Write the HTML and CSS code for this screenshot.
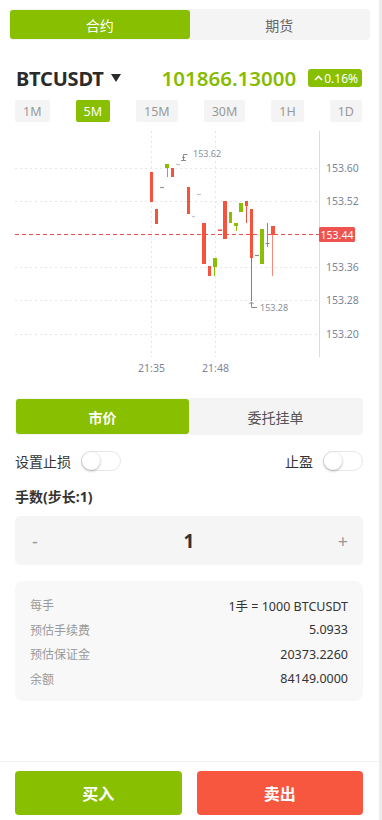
FILE: index.html
```html
<!DOCTYPE html>
<html lang="zh">
<head>
<meta charset="utf-8">
<title>BTCUSDT</title>
<link rel="stylesheet" href="styles.css">
</head>
<body>
<div class="page">
  <div class="top-tabs">
    <div class="top-tab active">合约</div>
    <div class="top-tab">期货</div>
  </div>

  <div class="ticker">
    <div class="symbol">BTCUSDT<span class="caret"></span></div>
    <div class="price">101866.13000</div>
    <div class="badge">
      <svg width="9" height="6" viewBox="0 0 9 6"><path d="M1 5 L4.5 1.5 L8 5" fill="none" stroke="#fff" stroke-width="1.6"/></svg>
      <span>0.16%</span>
    </div>
  </div>

  <div class="periods">
    <div class="period">1M</div>
    <div class="period active">5M</div>
    <div class="period">15M</div>
    <div class="period">30M</div>
    <div class="period">1H</div>
    <div class="period">1D</div>
  </div>

  <svg class="chart" width="382" height="252" viewBox="0 128 382 252">
    <g stroke="#e6e6e6" stroke-width="1" stroke-dasharray="2 3">
      <line x1="15" y1="168.5" x2="318" y2="168.5"/>
      <line x1="15" y1="201.5" x2="318" y2="201.5"/>
      <line x1="15" y1="267.5" x2="318" y2="267.5"/>
      <line x1="15" y1="300.5" x2="318" y2="300.5"/>
      <line x1="15" y1="334.5" x2="318" y2="334.5"/>
      <line x1="151.5" y1="131" x2="151.5" y2="357"/>
      <line x1="215.5" y1="131" x2="215.5" y2="357"/>
    </g>
    <line x1="319.5" y1="131" x2="319.5" y2="357" stroke="#dcdcdc"/>
    <line x1="15" y1="234.5" x2="319" y2="234.5" stroke="#ea5050" stroke-dasharray="4 3"/>

    <g fill="#f5533d">
      <rect x="150" y="172" width="3" height="30"/>
      <rect x="155" y="209" width="3" height="15"/>
      <rect x="171" y="168" width="3" height="9"/>
      <rect x="187" y="187" width="3" height="27"/>
      <rect x="202" y="223" width="4" height="41"/>
      <rect x="208" y="266" width="3" height="10"/>
      <rect x="218" y="229.5" width="4" height="1.5"/>
      <rect x="223" y="201" width="4" height="38"/>
      <rect x="245" y="201" width="3" height="5"/>
      <rect x="250" y="209" width="3" height="49"/>
      <rect x="271" y="226" width="4" height="9"/>
    </g>
    <g stroke="#f5533d" stroke-width="1">
      <line x1="246.5" y1="206" x2="246.5" y2="223"/>
      <line x1="251.5" y1="258" x2="251.5" y2="301"/>
      <line x1="272.5" y1="235" x2="272.5" y2="276" stroke="#f88a7c"/>
    </g>
    <g fill="#88bf00">
      <rect x="165" y="164" width="4" height="4"/>
      <rect x="213" y="258" width="4" height="9"/>
      <rect x="229" y="212" width="3" height="11"/>
      <rect x="234" y="223" width="4" height="3"/>
      <rect x="239" y="203" width="4" height="9"/>
      <rect x="260" y="229" width="4" height="35"/>
    </g>
    <g stroke="#88bf00" stroke-width="1">
      <line x1="167.5" y1="168" x2="167.5" y2="177"/>
      <line x1="214.5" y1="267" x2="214.5" y2="276"/>
      <line x1="236.5" y1="226" x2="236.5" y2="231"/>
    </g>
    <g stroke="#c4c4c4" stroke-width="1.2">
      <line x1="160" y1="187.5" x2="164" y2="187.5" stroke="#9a9a9a"/>
      <line x1="176" y1="164.5" x2="180" y2="164.5"/>
      <line x1="197" y1="194.5" x2="201" y2="194.5"/>
      <line x1="192" y1="216.5" x2="195" y2="216.5"/>
      <line x1="255" y1="255.5" x2="259" y2="255.5" stroke="#8a8a8a"/>
    </g>
    <g stroke="#8a8a8a" stroke-width="1" fill="none">
      <line x1="267.5" y1="223" x2="267.5" y2="247"/>
      <line x1="265.5" y1="243.5" x2="269.5" y2="243.5"/>
      <path d="M187.5 154.5 H183.5 V160 M181 160.5 H186 M182 157.5 H185"/>
      <path d="M251.5 302 V307.5 H257 M249.5 304 L251.5 302 L253.5 304"/>
    </g>
    <g class="mark">
      <text x="193" y="157">153.62</text>
      <text x="260" y="311">153.28</text>
    </g>
    <g class="axis">
      <text x="326" y="172">153.60</text>
      <text x="326" y="205">153.52</text>
      <text x="326" y="271">153.36</text>
      <text x="326" y="304">153.28</text>
      <text x="326" y="338">153.20</text>
      <text x="151.5" y="372" text-anchor="middle">21:35</text>
      <text x="215.5" y="372" text-anchor="middle">21:48</text>
    </g>
    <rect x="319" y="227" width="36" height="15" rx="1.5" fill="#ee5350"/>
    <text class="cur" x="337" y="238.5" text-anchor="middle">153.44</text>
  </svg>

  <div class="order-tabs">
    <div class="order-tab active">市价</div>
    <div class="order-tab">委托挂单</div>
  </div>

  <div class="switch-row">
    <div class="switch-item">
      <span>设置止损</span>
      <span class="switch"><span class="knob"></span></span>
    </div>
    <div class="switch-item">
      <span>止盈</span>
      <span class="switch"><span class="knob"></span></span>
    </div>
  </div>

  <div class="qty-label">手数(步长:1)</div>
  <div class="stepper">
    <span class="step">-</span>
    <span class="qty">1</span>
    <span class="step">+</span>
  </div>

  <div class="info">
    <div class="info-row"><span class="k">每手</span><span class="v">1手 = 1000 BTCUSDT</span></div>
    <div class="info-row"><span class="k">预估手续费</span><span class="v">5.0933</span></div>
    <div class="info-row"><span class="k">预估保证金</span><span class="v">20373.2260</span></div>
    <div class="info-row"><span class="k">余额</span><span class="v">84149.0000</span></div>
  </div>

  <div class="footer">
    <button class="btn buy">买入</button>
    <button class="btn sell">卖出</button>
  </div>
</div>
</body>
</html>
```

FILE: styles.css
```css
* { box-sizing: border-box; }
html, body { margin: 0; padding: 0; background: #fff; }
body {
  font-family: "Noto Sans", "Noto Sans CJK SC", sans-serif;
  color: #333;
}
.page {
  width: 382px;
  height: 820px;
  border-right: 3px solid #ececec;
  display: flex;
  flex-direction: column;
  overflow: hidden;
}
.top-tabs {
  margin: 9px 9px 0 9px;
  height: 31px;
  padding: 1px;
  background: #f4f4f4;
  border-radius: 4px;
  display: flex;
}
.top-tab {
  flex: 1;
  display: flex;
  align-items: center;
  justify-content: center;
  font-size: 14px;
  color: #666;
  border-radius: 3px;
}
.top-tab.active { background: #88bf00; color: #fff; }

.ticker {
  margin: 25px 17px 0 16px;
  height: 26px;
  display: flex;
  align-items: center;
}
.symbol {
  font-size: 20px;
  font-weight: 700;
  color: #2b2b2b;
  display: flex;
  align-items: center;
  letter-spacing: -0.2px;
}
.caret {
  margin-left: 7px;
  width: 0; height: 0;
  border-left: 5px solid transparent;
  border-right: 5px solid transparent;
  border-top: 8px solid #2b2b2b;
}
.price {
  margin-left: auto;
  font-size: 20.5px;
  font-weight: 600;
  color: #88bb00;
  letter-spacing: 0;
}
.badge {
  margin-left: 12px;
  height: 18px;
  padding: 0 4px 0 6px;
  background: #88bf00;
  border-radius: 3px;
  display: flex;
  align-items: center;
  gap: 1px;
  color: #fff;
  font-size: 12px;
}
.badge svg { display: block; margin-top: -1px; }

.periods {
  margin: 9px 17px 0 15px;
  display: flex;
  justify-content: space-between;
}
.period {
  height: 22px;
  padding: 0 8px;
  background: #f4f4f4;
  border-radius: 2px;
  font-size: 12.5px;
  color: #999;
  display: flex;
  align-items: center;
}
.period.active { background: #88bf00; color: #fff; }

.chart { display: block; margin-top: 6px; }
.chart text { font-family: "Noto Sans", sans-serif; }
.axis text { font-size: 10.5px; fill: #7d8597; }
.mark text { font-size: 9px; fill: #8a8f99; }
.cur { font-size: 10.5px; fill: #fff; }

.order-tabs {
  margin: 18px 16px 0 15px;
  height: 37px;
  padding: 1px;
  background: #f4f4f4;
  border-radius: 4px;
  display: flex;
}
.order-tab {
  flex: 1;
  display: flex;
  align-items: center;
  justify-content: center;
  font-size: 14px;
  color: #555;
  border-radius: 3px;
}
.order-tab.active { background: #88bf00; color: #fff; font-weight: 700; }

.switch-row {
  margin: 16px 16px 0 15px;
  display: flex;
  justify-content: space-between;
}
.switch-item {
  display: flex;
  align-items: center;
  gap: 10px;
  font-size: 14px;
  color: #333;
}
.switch {
  width: 40px;
  height: 20px;
  border: 1px solid #e6e6e6;
  border-radius: 10px;
  background: #fff;
  display: flex;
  align-items: center;
}
.knob {
  width: 18px;
  height: 18px;
  border-radius: 50%;
  background: #fff;
  box-shadow: 0 1px 3px rgba(0,0,0,0.3);
}

.qty-label {
  margin: 16px 15px 0 15px;
  font-size: 14px;
  font-weight: 700;
  color: #333;
  height: 20px;
  line-height: 20px;
}
.stepper {
  margin: 9px 16px 0 15px;
  height: 49px;
  background: #f5f5f5;
  border-radius: 5px;
  display: flex;
  align-items: center;
  justify-content: space-between;
  padding: 0 12px 0 12px;
}
.step { font-size: 18px; color: #999; width: 16px; text-align: center; }
.qty { font-size: 19px; font-weight: 700; color: #333; }

.info {
  margin: 16px 16px 0 15px;
  height: 120px;
  background: #f8f8f8;
  border-radius: 8px;
  padding: 12px 15px 0 15px;
}
.info-row {
  height: 24.5px;
  display: flex;
  align-items: center;
  justify-content: space-between;
  font-size: 12.5px;
}
.info-row .k { color: #9a9a9a; font-size: 12px; }
.info-row .v { color: #333; }

.footer {
  margin-top: auto;
  border-top: 1px solid #f2f2f2;
  height: 59px;
  padding: 9px 16px 0 15px;
  display: flex;
  gap: 15px;
}
.btn {
  flex: 1;
  height: 44px;
  border: none;
  border-radius: 4px;
  color: #fff;
  font-family: "Noto Sans", "Noto Sans CJK SC", sans-serif;
  font-size: 16px;
  font-weight: 700;
}
.btn.buy { background: #88bf00; }
.btn.sell { background: #f7563f; }
```
